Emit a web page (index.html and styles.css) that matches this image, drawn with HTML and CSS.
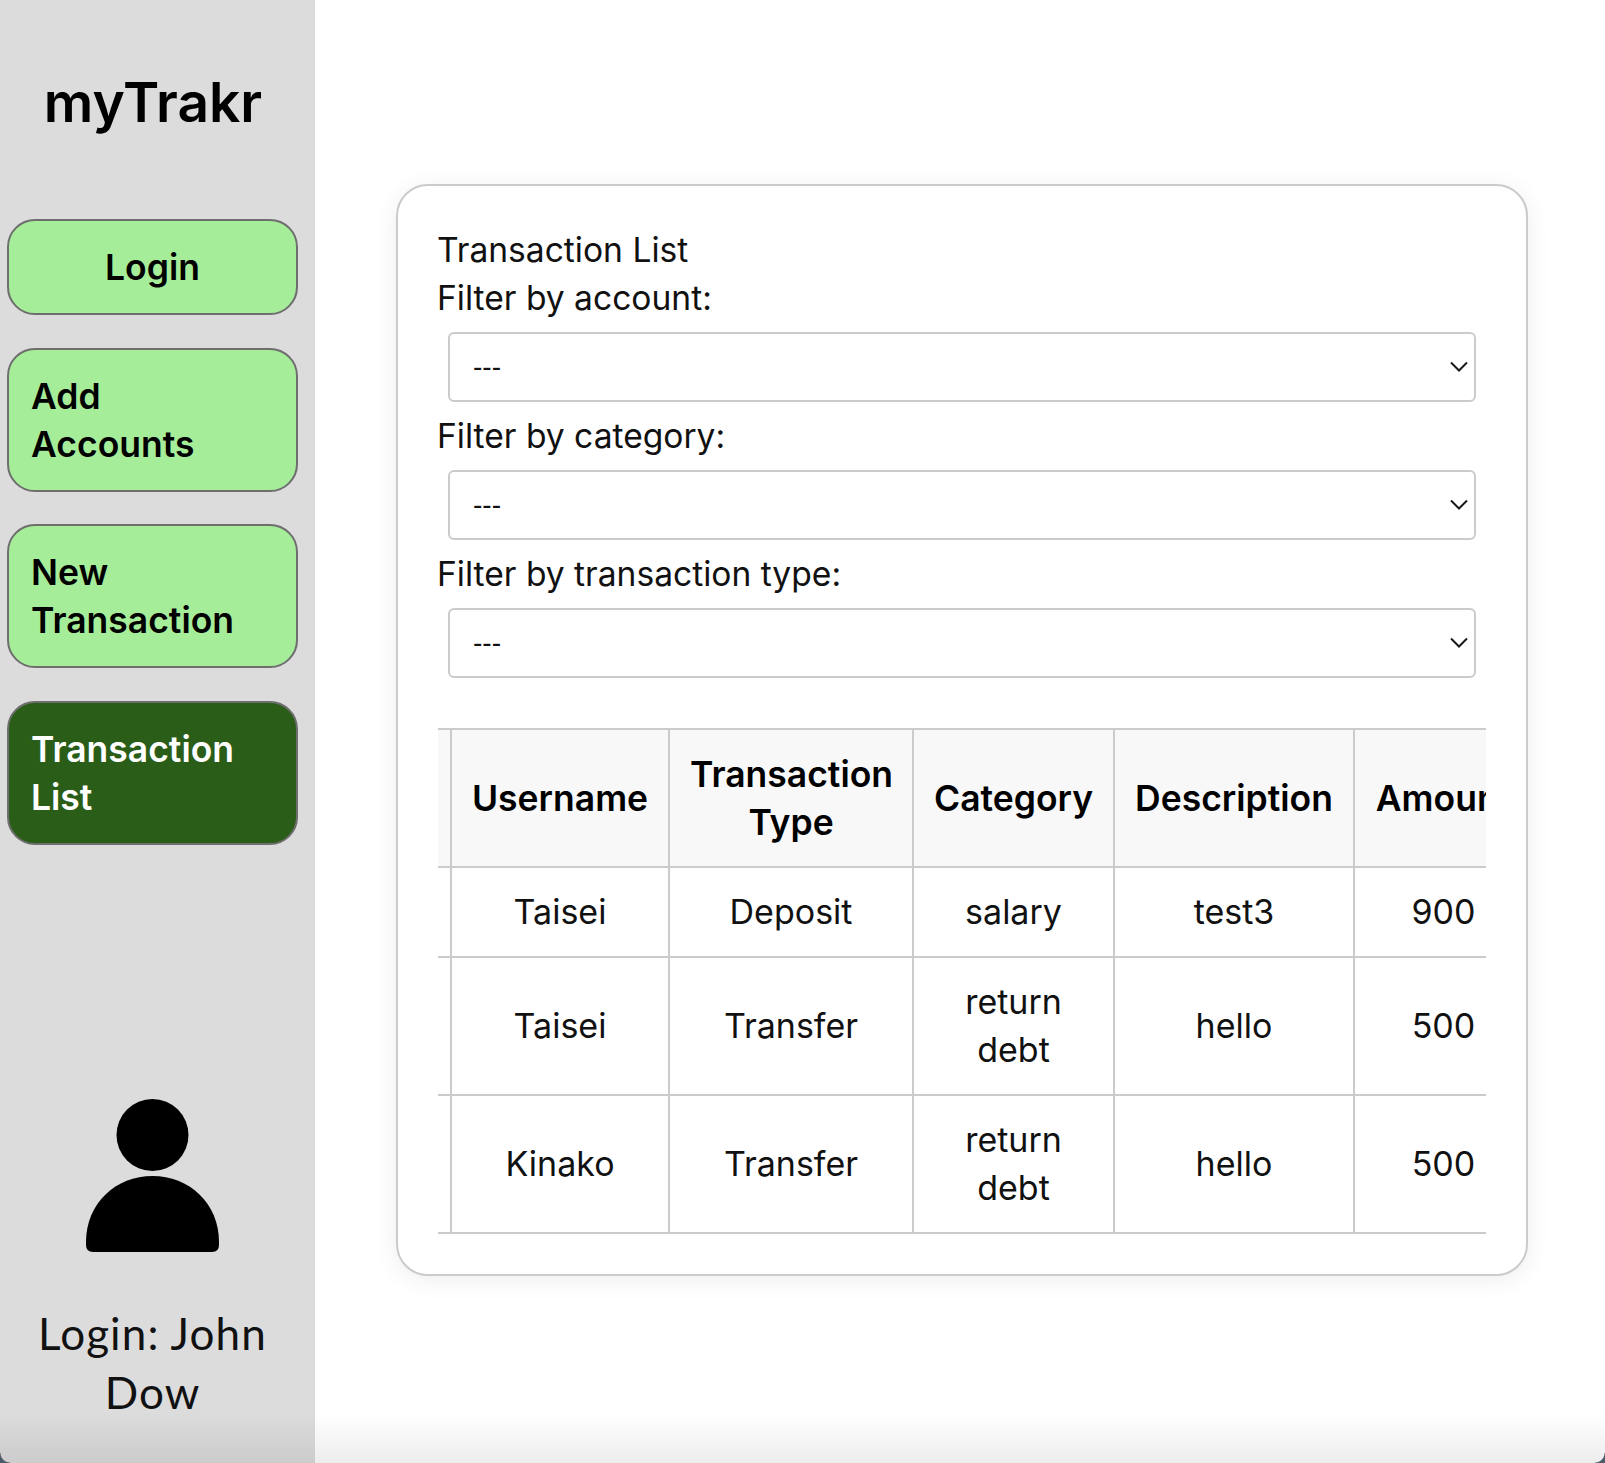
FILE: index.html
```html
<!DOCTYPE html>
<html lang="en">
<head>
<meta charset="utf-8">
<title>myTrakr</title>
<link rel="stylesheet" href="styles.css">
</head>
<body>
<div class="app">
  <aside class="sidebar">
    <h1 class="brand">myTrakr</h1>
    <nav class="nav">
      <a class="nav-btn nav-center">Login</a>
      <a class="nav-btn">Add Accounts</a>
      <a class="nav-btn">New Transaction</a>
      <a class="nav-btn nav-active">Transaction List</a>
    </nav>
    <div class="user">
      <svg class="avatar" viewBox="0 0 133 153" width="133" height="153" aria-hidden="true">
        <circle cx="66.5" cy="36" r="36" fill="#000"/>
        <path d="M0 143C0 104 30 77 66.500 77S133 104 133 143V146Q133 153 126 153H7Q0 153 0 146Z" fill="#000"/>
      </svg>
      <p class="user-name">Login: John Dow</p>
    </div>
  </aside>
  <main class="main">
    <section class="card">
      <div class="label">Transaction List</div>
      <label class="label" for="f1">Filter by account:</label>
      <div class="select-wrap">
        <select id="f1" class="select"><option>---</option></select>
        <svg class="chevron" viewBox="0 0 18 11" width="18" height="11" aria-hidden="true"><path d="M1 1.500L9 9.500L17 1.500" fill="none" stroke="#1a1a1a" stroke-width="2"/></svg>
      </div>
      <label class="label" for="f2">Filter by category:</label>
      <div class="select-wrap">
        <select id="f2" class="select"><option>---</option></select>
        <svg class="chevron" viewBox="0 0 18 11" width="18" height="11" aria-hidden="true"><path d="M1 1.500L9 9.500L17 1.500" fill="none" stroke="#1a1a1a" stroke-width="2"/></svg>
      </div>
      <label class="label" for="f3">Filter by transaction type:</label>
      <div class="select-wrap">
        <select id="f3" class="select"><option>---</option></select>
        <svg class="chevron" viewBox="0 0 18 11" width="18" height="11" aria-hidden="true"><path d="M1 1.500L9 9.500L17 1.500" fill="none" stroke="#1a1a1a" stroke-width="2"/></svg>
      </div>
      <div class="table-wrap">
        <table class="table">
          <thead>
            <tr>
              <th class="c0"></th>
              <th class="c1">Username</th>
              <th class="c2">Transaction Type</th>
              <th class="c3">Category</th>
              <th class="c4">Description</th>
              <th class="c5">Amount</th>
            </tr>
          </thead>
          <tbody>
            <tr><td></td><td>Taisei</td><td>Deposit</td><td>salary</td><td>test3</td><td>900</td></tr>
            <tr><td></td><td>Taisei</td><td>Transfer</td><td>return debt</td><td>hello</td><td>500</td></tr>
            <tr><td></td><td>Kinako</td><td>Transfer</td><td>return debt</td><td>hello</td><td>500</td></tr>
          </tbody>
        </table>
      </div>
    </section>
  </main>
</div>
<div class="window-fade"></div>
</body>
</html>
```

FILE: styles.css
```css
* { box-sizing: border-box; }
html, body { margin: 0; height: 100%; overflow: hidden; }
body { background: #fff; color: #000; font-family: "Inter", "Liberation Sans", sans-serif; }
.app { display: grid; grid-template-columns: 315px minmax(0, 1fr); height: 1463px; }

.sidebar { background: #dcdcdc; display: flex; flex-direction: column; padding: 0 17px 0 7px; }
.brand { margin: 72px 0 0; height: 147px; padding-left: 1px; text-align: center; font: 600 55px/60px "Inter", "Liberation Sans", sans-serif; letter-spacing: 0; }
.nav { display: flex; flex-direction: column; gap: 32.7px; }
.nav-btn { display: block; border: 2px solid #6e6e6e; border-radius: 28px; background: #a6ed99; padding: 23px 30px 21px 22px; font: 600 35.5px/48px "Inter", "Liberation Sans", sans-serif; color: #000; }
.nav-center { text-align: center; padding-left: 22px; padding-right: 22px; }
.nav-active { background: #2a5d18; color: #fff; }

.user { margin-top: auto; display: flex; flex-direction: column; align-items: center; padding-bottom: 41px; }
.avatar { display: block; }
.user-name { margin: 52px 0 0; text-align: center; font: 400 44px/59px "Lato", "Liberation Sans", sans-serif; letter-spacing: 1.1px; color: #111; padding: 0 20px; }

.main { min-width: 0; padding: 184px 77px 0 81px; }
.card { background: #fff; border: 2px solid #cbcbcb; border-radius: 32px; padding: 40px 40px 40px; height: 1092px; box-shadow: 0 4px 24px rgba(0,0,0,.07); }
.label { display: block; margin-left: -1px; font: 400 33.6px/48px "Inter", "Liberation Sans", sans-serif; color: #111; }
.select-wrap { position: relative; margin: 10px; }
.select { display: block; width: 100%; height: 70px; padding: 0 23px 2px; appearance: none; -webkit-appearance: none; background: #fff; border: 2px solid #cbcbcb; border-radius: 6px; font: 400 28px "Liberation Sans", sans-serif; color: #111; }
.chevron { position: absolute; right: 8px; top: 29px; pointer-events: none; }

.table-wrap { margin-top: 50px; overflow: hidden; }
.table { border-collapse: collapse; table-layout: fixed; width: 1095px; font-size: 34px; line-height: 48px; color: #111; }
.table th, .table td { border: 2px solid #cbcbcb; padding: 20px; text-align: center; }
.table th { background: #f8f8f8; font-weight: 600; font-size: 35.5px; color: #000; padding-top: 21px; padding-bottom: 19px; }
.table th:first-child, .table td:first-child { border-left: 0; padding: 0; }
.c0 { width: 13px; }
.c1 { width: 218px; }
.c2 { width: 244px; }
.c3 { width: 201px; }
.c4 { width: 240px; }
.c5 { width: 179px; }

.window-fade { position: fixed; left: 0; right: 0; bottom: 0; height: 50px; pointer-events: none; background: linear-gradient(to bottom, rgba(0,0,0,0), rgba(0,0,0,.07)); }
.window-fade::before, .window-fade::after { content: ""; position: absolute; bottom: 0; width: 10px; height: 10px; }
.window-fade::before { left: 0; background: radial-gradient(circle at top right, transparent 9px, #4d5a68 10px); }
.window-fade::after { right: 0; background: radial-gradient(circle at top left, transparent 9px, #4d5a68 10px); }
```
